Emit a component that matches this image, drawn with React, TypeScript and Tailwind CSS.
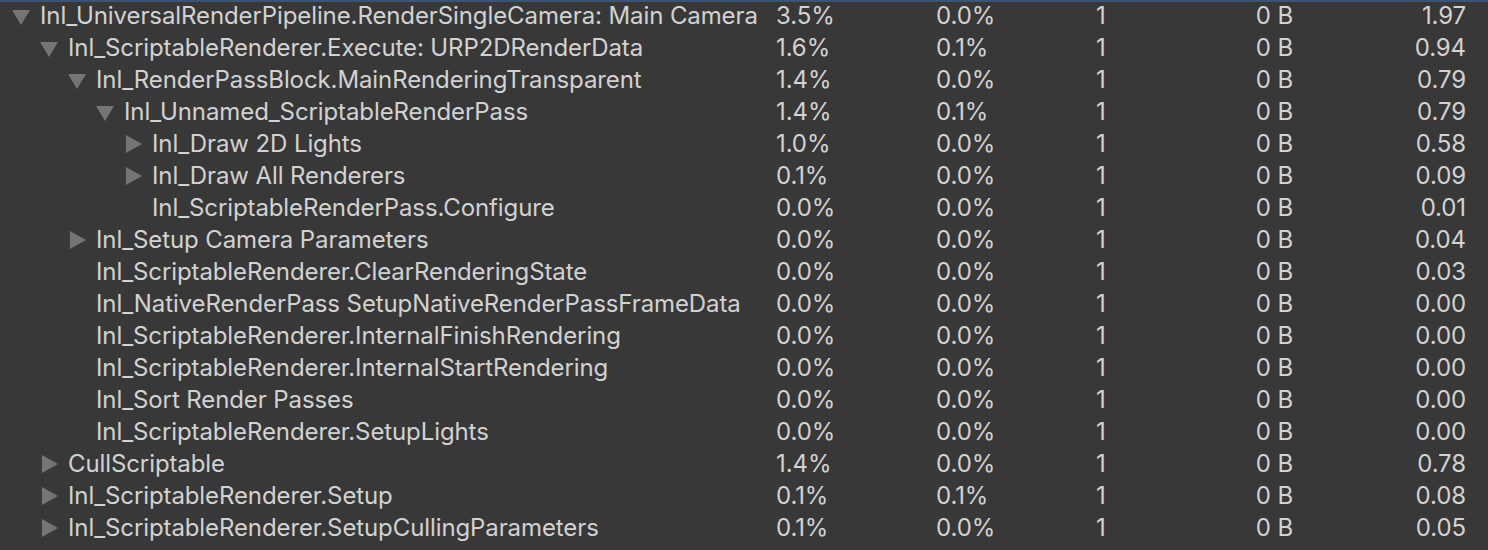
type Row = {
  name: string;
  level: number;
  arrow: "down" | "right" | null;
  total: string;
  self: string;
  calls: string;
  gc: string;
  time: string;
};

const rows: Row[] = [
  { name: "Inl_UniversalRenderPipeline.RenderSingleCamera: Main Camera", level: 0, arrow: "down", total: "3.5%", self: "0.0%", calls: "1", gc: "0 B", time: "1.97" },
  { name: "Inl_ScriptableRenderer.Execute: URP2DRenderData", level: 1, arrow: "down", total: "1.6%", self: "0.1%", calls: "1", gc: "0 B", time: "0.94" },
  { name: "Inl_RenderPassBlock.MainRenderingTransparent", level: 2, arrow: "down", total: "1.4%", self: "0.0%", calls: "1", gc: "0 B", time: "0.79" },
  { name: "Inl_Unnamed_ScriptableRenderPass", level: 3, arrow: "down", total: "1.4%", self: "0.1%", calls: "1", gc: "0 B", time: "0.79" },
  { name: "Inl_Draw 2D Lights", level: 4, arrow: "right", total: "1.0%", self: "0.0%", calls: "1", gc: "0 B", time: "0.58" },
  { name: "Inl_Draw All Renderers", level: 4, arrow: "right", total: "0.1%", self: "0.0%", calls: "1", gc: "0 B", time: "0.09" },
  { name: "Inl_ScriptableRenderPass.Configure", level: 4, arrow: null, total: "0.0%", self: "0.0%", calls: "1", gc: "0 B", time: "0.01" },
  { name: "Inl_Setup Camera Parameters", level: 2, arrow: "right", total: "0.0%", self: "0.0%", calls: "1", gc: "0 B", time: "0.04" },
  { name: "Inl_ScriptableRenderer.ClearRenderingState", level: 2, arrow: null, total: "0.0%", self: "0.0%", calls: "1", gc: "0 B", time: "0.03" },
  { name: "Inl_NativeRenderPass SetupNativeRenderPassFrameData", level: 2, arrow: null, total: "0.0%", self: "0.0%", calls: "1", gc: "0 B", time: "0.00" },
  { name: "Inl_ScriptableRenderer.InternalFinishRendering", level: 2, arrow: null, total: "0.0%", self: "0.0%", calls: "1", gc: "0 B", time: "0.00" },
  { name: "Inl_ScriptableRenderer.InternalStartRendering", level: 2, arrow: null, total: "0.0%", self: "0.0%", calls: "1", gc: "0 B", time: "0.00" },
  { name: "Inl_Sort Render Passes", level: 2, arrow: null, total: "0.0%", self: "0.0%", calls: "1", gc: "0 B", time: "0.00" },
  { name: "Inl_ScriptableRenderer.SetupLights", level: 2, arrow: null, total: "0.0%", self: "0.0%", calls: "1", gc: "0 B", time: "0.00" },
  { name: "CullScriptable", level: 1, arrow: "right", total: "1.4%", self: "0.0%", calls: "1", gc: "0 B", time: "0.78" },
  { name: "Inl_ScriptableRenderer.Setup", level: 1, arrow: "right", total: "0.1%", self: "0.1%", calls: "1", gc: "0 B", time: "0.08" },
  { name: "Inl_ScriptableRenderer.SetupCullingParameters", level: 1, arrow: "right", total: "0.1%", self: "0.0%", calls: "1", gc: "0 B", time: "0.05" },
];

// indent per tree level, in px
const indents = ["pl-[12px]", "pl-[40px]", "pl-[68px]", "pl-[96px]", "pl-[124px]"];

function Arrow({ dir }: { dir: "down" | "right" | null }) {
  if (!dir) return <span className="w-[28px] shrink-0" />;
  return (
    <span className="w-[28px] shrink-0 flex items-center">
      {dir === "down" ? (
        <svg width="18" height="15" viewBox="0 0 18 15" className="mt-[2px]">
          <polygon points="0,0 18,0 9,15" fill="#757575" />
        </svg>
      ) : (
        <svg width="16" height="18" viewBox="0 0 16 18" className="ml-[2px]">
          <polygon points="0,0 16,9 0,18" fill="#757575" />
        </svg>
      )}
    </span>
  );
}

export default function App() {
  return (
    <div className="w-[1488px] h-[550px] bg-[#383838] overflow-hidden border-t-2 border-[#34557f] text-[#d2d2d2] text-[24px] tracking-[-0.1px] font-['Inter',sans-serif]">
      <div className="flex flex-col -mt-[2px]">
        {rows.map((r, i) => (
          <div key={i} className="h-[32px] flex items-center whitespace-nowrap leading-none">
            <div className={`w-[776px] shrink-0 flex items-center ${indents[r.level]}`}>
              <Arrow dir={r.arrow} />
              <span>{r.name}</span>
            </div>
            <div className="w-[160px] shrink-0">{r.total}</div>
            <div className="w-[160px] shrink-0">{r.self}</div>
            <div className="w-[100px] shrink-0">{r.calls}</div>
            <div className="w-[97px] shrink-0 text-right">{r.gc}</div>
            <div className="w-[173px] shrink-0 text-right">{r.time}</div>
          </div>
        ))}
      </div>
    </div>
  );
}
